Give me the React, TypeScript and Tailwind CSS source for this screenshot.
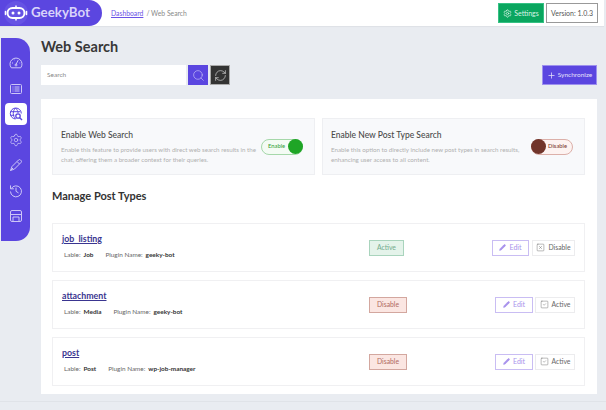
import { Plus, RefreshCw, Search, Settings, Pencil, SquareX, SquareCheck } from "lucide-react";

const lato = { fontFamily: "Lato, sans-serif" };

const Gauge = () => (
  <svg width="14" height="14" viewBox="0 0 14 14" fill="none" stroke="currentColor" strokeWidth="1">
    <path d="M2.300 11.800a6 6 0 1 1 9.400 0z" strokeLinejoin="round" />
    <path d="M7 8.500 9 4.500" strokeLinecap="round" />
    <circle cx="7" cy="9" r="1" />
    <path d="M3 7h1M10.500 7h.7M5 3.500l.4.700" />
  </svg>
);

const ListBox = () => (
  <svg width="14" height="14" viewBox="0 0 14 14" fill="none" stroke="currentColor" strokeWidth="1">
    <rect x="1.500" y="2.500" width="11" height="9" rx="1" />
    <path d="M3.500 5h1M3.500 7h1M3.500 9h1M5.500 5h5M5.500 7h5M5.500 9h5" />
  </svg>
);

const GlobeSearch = () => (
  <svg width="14" height="14" viewBox="0 0 14 14" fill="none" stroke="currentColor" strokeWidth="1">
    <path d="M12.300 6.500A5.500 5.500 0 1 0 6.500 12" />
    <path d="M6.500 1c-3 3-3 8 0 11M6.500 1c1.800 1.800 2.500 3.500 2.600 5M1.300 4.700h10M1.300 8.300h4" />
    <circle cx="9" cy="9" r="2.200" strokeWidth="1.300" />
    <path d="m10.700 10.700 2.300 2.300" strokeWidth="1.400" />
  </svg>
);

const Pen = () => (
  <svg width="14" height="14" viewBox="0 0 14 14" fill="none" stroke="currentColor" strokeWidth="1" strokeLinejoin="round">
    <path d="M1.500 12.500 3 8.500l5-5 2.500 2.500-5 5z" />
    <path d="M8 3.500 9.500 2a1.400 1.400 0 0 1 2 0l.5.500a1.400 1.400 0 0 1 0 2L10.500 6M1.500 12.500l2.500-2.500" />
  </svg>
);

const HistoryIcon = () => (
  <svg width="14" height="14" viewBox="0 0 14 14" fill="none" stroke="currentColor" strokeWidth="1">
    <path d="M2.300 4.500A5.500 5.500 0 1 1 1.500 7.500" />
    <path d="M1.500 1.800v3h3M7 4v3.300l2.200 1.400" strokeLinecap="round" strokeLinejoin="round" />
  </svg>
);

const ArchiveIcon = () => (
  <svg width="14" height="14" viewBox="0 0 14 14" fill="none" stroke="currentColor" strokeWidth="1">
    <rect x="1.500" y="1.500" width="11" height="11" rx="1.500" />
    <path d="M1.500 5.500h11M4 8h6v4.500H4z" />
  </svg>
);

const GearIcon = () => <Settings size={14} strokeWidth={1.300} />;

const navItems = [Gauge, ListBox, GlobeSearch, GearIcon, Pen, HistoryIcon, ArchiveIcon];

const postTypes = [
  { name: "job_listing", label: "Job", plugin: "geeky-bot", active: true },
  { name: "attachment", label: "Media", plugin: "geeky-bot", active: false },
  { name: "post", label: "Post", plugin: "wp-job-manager", active: false },
];

const Logo = () => (
  <svg width="26" height="26" viewBox="0 0 26 26" fill="none">
    <circle cx="13" cy="13" r="12" fill="#6653e4" />
    <rect x="4.500" y="8" width="17" height="10" rx="5" stroke="#fff" strokeWidth="2" />
    <circle cx="10" cy="13" r="1.500" fill="#fff" />
    <circle cx="16" cy="13" r="1.500" fill="#fff" />
    <path d="M13 5.500v2M13 18.500v2" stroke="#fff" strokeWidth="1.500" />
    <path d="M2.500 11.500v3M23.500 11.500v3" stroke="#fff" strokeWidth="1.500" strokeLinecap="round" />
  </svg>
);

const Toggle = ({ on }: { on: boolean }) =>
  on ? (
    <div className="flex h-[16px] w-[42px] shrink-0 items-center justify-between rounded-full border border-[#a6d8aa] bg-[#f4fbf4] pl-[6px]">
      <span className="text-[5.800px] font-medium text-[#3aa541]">Enable</span>
      <span className="-mr-px size-[15px] rounded-full bg-[#1fa526]" />
    </div>
  ) : (
    <div className="flex h-[16px] w-[42px] shrink-0 items-center justify-between rounded-full border border-[#dcb0a9] bg-[#fdf3f1] pr-[5px]">
      <span className="-ml-px size-[15px] rounded-full bg-[#71352b]" />
      <span className="text-[5.800px] font-medium text-[#7d4034]">Disable</span>
    </div>
  );

const FeatureCard = ({ title, text, on }: { title: string; text: React.ReactNode; on: boolean }) => (
  <div className="flex h-[57px] flex-1 items-center justify-between border border-[#eeeff2] bg-[#f8f9fb] pl-[8px] pr-[11px]">
    <div>
      <div className="text-[8.500px] leading-[12px] font-medium text-[#4a4a4a]">{title}</div>
      <p className="mt-[4px] text-[6.200px] leading-[9.500px] text-[#b0b0b0]">{text}</p>
    </div>
    <Toggle on={on} />
  </div>
);

const PostRow = ({ name, label, plugin, active }: (typeof postTypes)[number]) => (
  <div className="flex h-[49px] items-center border border-[#f0f0f2] bg-white pl-[9px]">
    <div className="w-[307px] pb-[3px]">
      <a href="#" className="block text-[8.800px] leading-[12px] font-bold text-[#3a3590] underline">
        {name}
      </a>
      <div className="mt-[5px] flex pl-[2px] text-[6.400px] leading-[10px] text-[#666]">
        <span>Lable:</span>
        <span className="ml-[3px] font-bold text-[#333]">{label}</span>
        <span className="ml-[12px]">Plugin Name:</span>
        <span className="ml-[3px] font-bold text-[#333]">{plugin}</span>
      </div>
    </div>
    {active ? (
      <span className="flex h-[16px] w-[35px] items-center justify-center border border-[#a9d4bd] bg-[#e4f3ea] text-[6.800px] text-[#72ab8c]">
        Active
      </span>
    ) : (
      <span className="flex h-[16px] w-[38px] items-center justify-center border border-[#d3a79f] bg-[#fbe6e2] text-[6.800px] text-[#b06a5f]">
        Disable
      </span>
    )}
    <div className={`ml-auto flex items-center pr-[9px] ${active ? "gap-[3px]" : "gap-[2px]"}`}>
      <button className={`flex h-[16px] items-center justify-center gap-[3px] border border-[#c9bdf3] bg-white text-[7px] text-[#a893ec] ${active ? "w-[37px]" : "w-[38px]"}`}>
        <Pencil size={7} fill="currentColor" />
        Edit
      </button>
      <button className={`flex h-[16px] items-center justify-center gap-[3px] border border-[#ececee] bg-white text-[6.800px] font-normal text-[#666] ${active ? "w-[43px]" : "w-[40px]"}`}>
        {active ? <SquareX size={9} strokeWidth={1.200} /> : <SquareCheck size={9} strokeWidth={1.200} />}
        {active ? "Disable" : "Active"}
      </button>
    </div>
  </div>
);

export default function App() {
  return (
    <div style={lato} className="flex h-[410px] w-[606px] flex-col overflow-hidden bg-[#e9ecf1]">
      <header className="mr-[2px] flex h-[26px] shrink-0 items-center bg-white pr-[6px] shadow-[0_1px_1px_rgba(0,0,0,0.04)]">
        <div className="flex h-full w-[102px] items-center gap-[2px] rounded-r-[20px] bg-[#5b46e0] pl-[3px]">
          <Logo />
          <span className="text-[13.300px] font-bold text-[#d9d3fa]">GeekyBot</span>
        </div>
        <nav className="ml-[9px] flex items-center gap-[3px] text-[6.800px]">
          <a href="#" className="text-[#6a52e6] underline">Dashboard</a>
          <span className="text-[#8a8a8a]">/ Web Search</span>
        </nav>
        <div className="ml-auto flex items-center gap-[2px]">
          <button className="flex h-[20px] w-[46px] items-center justify-center gap-[2px] border border-[#35c184] bg-[#0aa65f] text-[7px] text-[#d8f3e6]">
            <Settings size={9} />
            Settings
          </button>
          <span className="flex h-[20px] w-[52px] items-center justify-center border border-[#999] bg-white text-[7px] text-[#555]">
            Version: 1.0.3
          </span>
        </div>
      </header>

      <div className="flex flex-1">
        <aside className="ml-[1px] mt-[12px] flex h-[203px] w-[29px] flex-col items-center gap-[3.500px] rounded-r-[14px] bg-[#5b46e0] pt-[14px]">
          {navItems.map((Icon, i) => (
            <div key={i} className={`flex h-[22px] items-center justify-center rounded-[4px] ${i === 2 ? "w-[22px] bg-white text-[#5b46e0]" : "w-full text-[#cdc6f7]"}`}>
              <Icon />
            </div>
          ))}
        </aside>

        <main className="ml-[11px] mr-[9px] flex-1 pt-[10px]">
          <h1 className="text-[14.500px] leading-[22px] font-bold text-[#383838]">Web Search</h1>
          <div className="mt-[7px] flex h-[20px] items-center">
            <div className="flex h-full w-[145px] items-center bg-white pl-[6px] text-[6.500px] text-[#888]">Search</div>
            <button className="ml-[2px] flex size-[20px] items-center justify-center bg-[#5b46e0] text-[#c9c2f5]">
              <Search size={13} strokeWidth={1.200} />
            </button>
            <button className="ml-[2px] flex size-[20px] items-center justify-center border border-[#aaa] bg-[#333] text-[#ddd]">
              <RefreshCw size={13} strokeWidth={1.200} />
            </button>
            <button className="ml-auto flex h-[20px] w-[55px] items-center justify-center gap-[2px] border border-[#9d90ee] bg-[#5b46e0] text-[6.500px] text-[#e4e0fb]">
              <Plus size={9} strokeWidth={2} />
              Synchronize
            </button>
          </div>

          <section className="mt-[14px] h-[295px] bg-white pl-[11px] pr-[12px] pt-[19px]">
            <div className="flex gap-[7px]">
              <FeatureCard
                title="Enable Web Search"
                on
                text={<>Enable this feature to provide users with direct web search results in the<br />chat, offering them a broader context for their queries.</>}
              />
              <FeatureCard
                title="Enable New Post Type Search"
                on={false}
                text={<>Enable this option to directly include new post types in search results,<br />enhancing user access to all content.</>}
              />
            </div>
            <h2 className="mt-[14px] text-[11px] leading-[14px] font-bold text-[#333]">Manage Post Types</h2>
            <div className="mt-[20px] flex flex-col gap-[8px]">
              {postTypes.map((p) => (
                <PostRow key={p.name} {...p} />
              ))}
            </div>
          </section>
        </main>
      </div>
      <div className="mb-[8px] h-px bg-[#e0e3e8]" />
    </div>
  );
}
